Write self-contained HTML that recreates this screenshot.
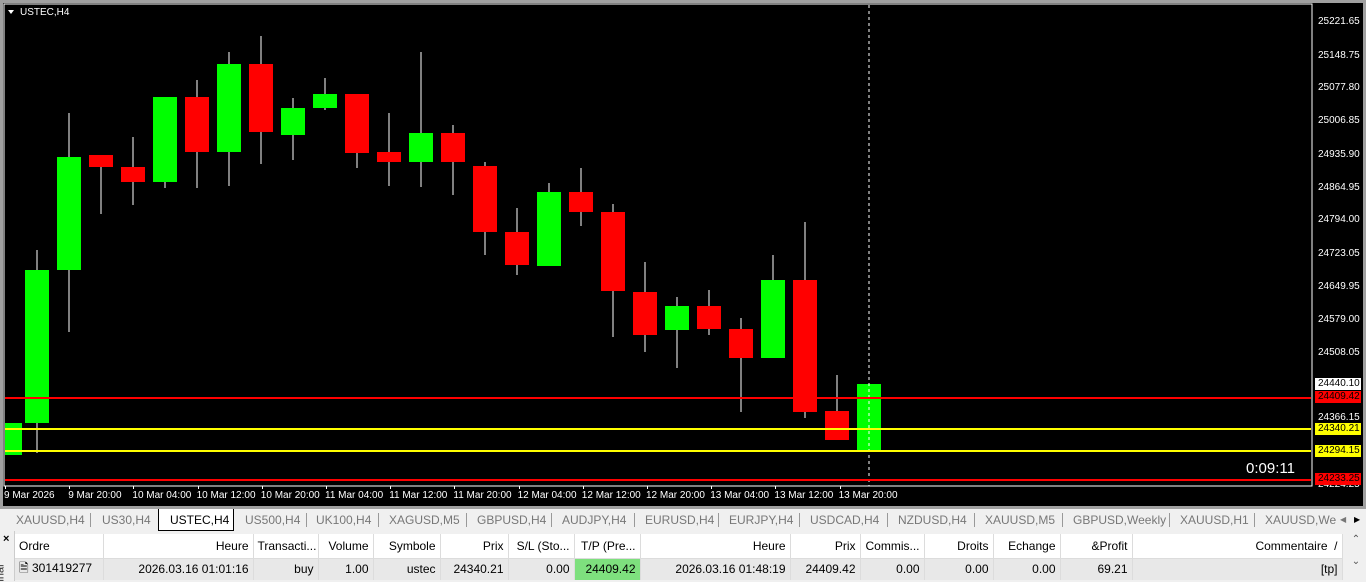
<!DOCTYPE html><html><head><style>
*{margin:0;padding:0;box-sizing:border-box}
body{width:1366px;height:581px;background:#f0f0f0;font-family:"Liberation Sans",sans-serif;overflow:hidden;position:relative}
.ax{position:absolute;font-size:10px;color:#fff}
.tabs{position:absolute;top:509px;left:0;width:1366px;height:22px;background:#f0f0f0;font-size:12px;color:#777}
.tabs span{position:absolute;top:4px}
.sep{position:absolute;top:4px;width:1px;height:14px;background:#999}
table{position:absolute;left:15px;top:534px;border-collapse:collapse;font-size:12px;color:#000;table-layout:fixed;width:1327px}
td{height:24px;padding:0 4px;text-align:right;border-right:1px solid #dcdcdc;white-space:nowrap;overflow:hidden}
tr.h td{background:#fff;border-bottom:1px solid #dcdcdc}
tr.r td{background:#e8e8e8;height:21px}
</style></head><body>
<svg width="1366" height="509" style="position:absolute;left:0;top:0">
<rect width="1366" height="509" fill="#000"/>
<rect x="0" y="0" width="1366" height="3" fill="#a0a0a0"/>
<rect x="0" y="0" width="3" height="509" fill="#a0a0a0"/>
<rect x="1363" y="0" width="3" height="509" fill="#a0a0a0"/>
<rect x="0" y="506" width="1366" height="3" fill="#a0a0a0"/>
<rect x="4" y="4" width="1308" height="482" fill="none" stroke="#fff" stroke-width="1"/>
<g id="c"></g>
<line x1="869" y1="5" x2="869" y2="486" stroke="#fff" stroke-dasharray="3,3"/>
<line x1="5" y1="398" x2="1311" y2="398" stroke="#f00" stroke-width="2"/>
<line x1="5" y1="429" x2="1311" y2="429" stroke="#ff0" stroke-width="2"/>
<line x1="5" y1="451" x2="1311" y2="451" stroke="#ff0" stroke-width="2"/>
<line x1="5" y1="480" x2="1311" y2="480" stroke="#f00" stroke-width="2"/>
<polygon points="8,10 14,10 11,14" fill="#fff"/>
<text x="20" y="15" fill="#fff" font-size="10" font-family="Liberation Sans">USTEC,H4</text>
<text x="1246" y="473" fill="#fff" font-size="15" font-family="Liberation Sans">0:09:11</text>
</svg>
<div id="lbl"></div>
<div class="tabs">
<span style="left:16px">XAUUSD,H4</span><div class="sep" style="left:90px"></div>
<span style="left:102px">US30,H4</span>
<div style="position:absolute;left:158px;top:0;width:76px;height:22px;background:#fff;border:1px solid #000;border-top:none"></div>
<span style="left:170px;color:#000">USTEC,H4</span>
<span style="left:245px">US500,H4</span><div class="sep" style="left:306px"></div>
<span style="left:316px">UK100,H4</span><div class="sep" style="left:378px"></div>
<span style="left:389px">XAGUSD,M5</span><div class="sep" style="left:466px"></div>
<span style="left:477px">GBPUSD,H4</span><div class="sep" style="left:551px"></div>
<span style="left:562px">AUDJPY,H4</span><div class="sep" style="left:634px"></div>
<span style="left:645px">EURUSD,H4</span><div class="sep" style="left:718px"></div>
<span style="left:729px">EURJPY,H4</span><div class="sep" style="left:799px"></div>
<span style="left:810px">USDCAD,H4</span><div class="sep" style="left:887px"></div>
<span style="left:898px">NZDUSD,H4</span><div class="sep" style="left:974px"></div>
<span style="left:985px">XAUUSD,M5</span><div class="sep" style="left:1062px"></div>
<span style="left:1073px">GBPUSD,Weekly</span><div class="sep" style="left:1169px"></div>
<span style="left:1180px">XAUUSD,H1</span><div class="sep" style="left:1254px"></div>
<span style="left:1265px">XAUUSD,We</span>
<span style="left:1340px;font-size:8px;top:6px">◀</span><span style="left:1354px;font-size:8px;top:6px;color:#000">▶</span>
</div>
<div style="position:absolute;left:0;top:531px;width:15px;height:50px;background:#f0f0f0;border-right:1px solid #ccc">
<div style="font-size:11px;font-weight:bold;position:absolute;left:3px;top:2px">×</div>
<div style="position:absolute;left:-8px;top:36px;transform:rotate(-90deg);font-size:11px;color:#333">inal</div>
</div>
<table>
<colgroup><col style="width:88px"><col style="width:150px"><col style="width:65px"><col style="width:55px"><col style="width:67px"><col style="width:68px"><col style="width:66px"><col style="width:66px"><col style="width:150px"><col style="width:70px"><col style="width:64px"><col style="width:69px"><col style="width:67px"><col style="width:72px"><col style="width:210px"></colgroup>
<tr class="h"><td style="text-align:left">Ordre</td><td>Heure</td><td>Transacti...</td><td>Volume</td><td>Symbole</td><td>Prix</td><td>S/L (Sto...</td><td>T/P (Pre...</td><td>Heure</td><td>Prix</td><td>Commis...</td><td>Droits</td><td>Echange</td><td>&amp;Profit</td><td>Commentaire &nbsp;/</td></tr>
<tr class="r"><td style="text-align:left">&#x1F5CE; 301419277</td><td>2026.03.16 01:01:16</td><td>buy</td><td>1.00</td><td>ustec</td><td>24340.21</td><td>0.00</td><td style="background:#7ee07e">24409.42</td><td>2026.03.16 01:48:19</td><td>24409.42</td><td>0.00</td><td>0.00</td><td>0.00</td><td>69.21</td><td>[tp]</td></tr>
</table>
<div style="position:absolute;left:1346px;top:534px;width:20px;height:47px;background:#f0f0f0;font-size:10px;color:#555;text-align:center">⌃<br><br>⌄</div>
<script>
var C=[[10,423,455,423,455,1],[37,270,423,250,453,1],[69,157,270,113,332,1],[101,155,167,155,214,0],[133,167,182,137,205,0],[165,97,182,97,188,1],[197,97,152,80,188,0],[229,64,152,52,186,1],[261,64,132,36,164,0],[293,108,135,98,160,1],[325,94,108,78,110,1],[357,94,153,94,168,0],[389,152,162,113,186,0],[421,133,162,52,187,1],[453,133,162,125,195,0],[485,166,232,162,255,0],[517,232,265,208,275,0],[549,192,266,183,266,1],[581,192,212,168,226,0],[613,212,291,204,337,0],[645,292,335,262,352,0],[677,306,330,297,368,1],[709,306,329,290,335,0],[741,329,358,318,412,0],[773,280,358,255,358,1],[805,280,412,222,418,0],[837,411,440,375,440,0],[869,384,451,384,451,1]];
var s='';C.forEach(function(c){var col=c[5]?'#0f0':'#f00';s+='<line x1="'+c[0]+'" y1="'+c[3]+'" x2="'+c[0]+'" y2="'+c[4]+'" stroke="#fff"/>';var x=c[0]-12,w=24;if(x<5){w-=5-x;x=5}s+='<rect x="'+x+'" y="'+c[1]+'" width="'+w+'" height="'+(c[2]-c[1])+'" fill="'+col+'"/>';});
document.getElementById('c').innerHTML=s;
var L=[[22,'25221.65'],[56,'25148.75'],[88,'25077.80'],[121,'25006.85'],[155,'24935.90'],[188,'24864.95'],[220,'24794.00'],[254,'24723.05'],[287,'24649.95'],[320,'24579.00'],[353,'24508.05'],[418,'24366.15'],[485,'24224.25']];
var h='';L.forEach(function(l){h+='<div class="ax" style="left:1318px;top:'+(l[0]-6)+'px">'+l[1]+'</div>';});
[[384,'24440.10','#fff'],[397,'24409.42','#f00'],[429,'24340.21','#ff0'],[451,'24294.15','#ff0'],[479,'24233.25','#f00']].forEach(function(b){h+='<div class="ax" style="left:1315px;top:'+(b[0]-6)+'px;background:'+b[2]+';color:#000;padding:0 3px;width:46px;height:12px;line-height:12px">'+b[1]+'</div>';});
var T=['9 Mar 2026','9 Mar 20:00','10 Mar 04:00','10 Mar 12:00','10 Mar 20:00','11 Mar 04:00','11 Mar 12:00','11 Mar 20:00','12 Mar 04:00','12 Mar 12:00','12 Mar 20:00','13 Mar 04:00','13 Mar 12:00','13 Mar 20:00'];
T.forEach(function(t,i){h+='<div class="ax" style="left:'+(4+i*64.2)+'px;top:490px">'+t+'</div><div style="position:absolute;left:'+(5+i*64.2)+'px;top:486px;width:1px;height:3px;background:#fff"></div>';});
document.getElementById('lbl').innerHTML=h;
</script>
</body></html>
